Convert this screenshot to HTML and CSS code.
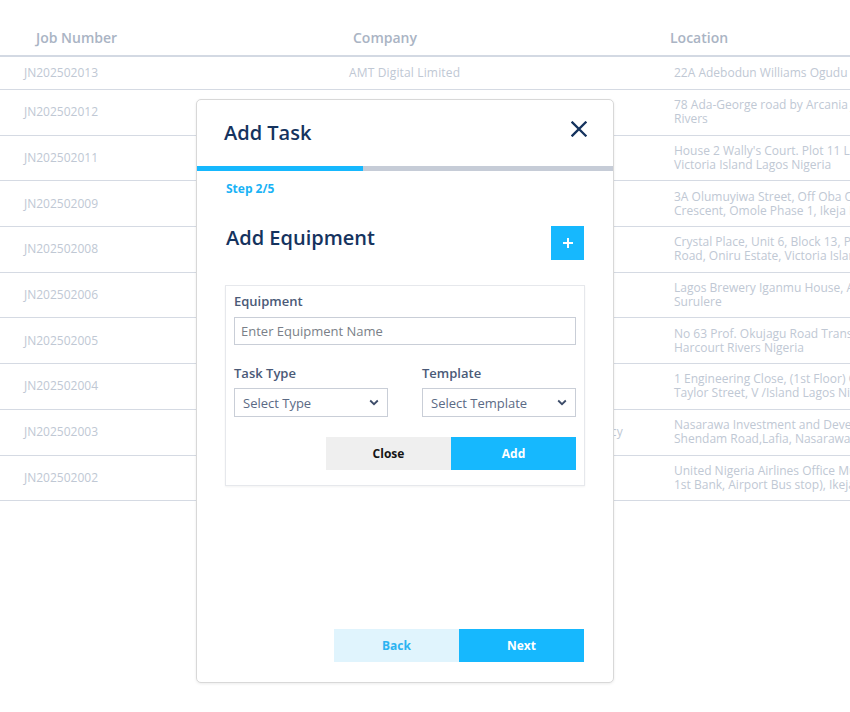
FILE: index.html
```html
<!DOCTYPE html>
<html lang="en">
<head>
<meta charset="utf-8">
<title>Jobs - Add Task</title>
<link rel="stylesheet" href="styles.css">
</head>
<body>
<div class="page">
  <div class="table">
    <div class="thead">
      <div class="th th-job">Job Number</div>
      <div class="th th-company">Company</div>
      <div class="th th-loc">Location</div>
    </div>
    <div class="tr tr-first">
      <div class="td td-job">JN202502013</div>
      <div class="td td-company">AMT Digital Limited</div>
      <div class="td td-loc">22A Adebodun Williams Ogudu Lagos</div>
    </div>
    <div class="tr">
      <div class="td td-job">JN202502012</div>
      <div class="td td-company">Eleme Petrochemicals Company</div>
      <div class="td td-loc">78 Ada-George road by Arcania Junction Port Harcourt<br>Rivers</div>
    </div>
    <div class="tr">
      <div class="td td-job">JN202502011</div>
      <div class="td td-company">Lagos Continental Hotel</div>
      <div class="td td-loc">House 2 Wally's Court. Plot 11 Lekki Road<br>Victoria Island Lagos Nigeria</div>
    </div>
    <div class="tr">
      <div class="td td-job">JN202502009</div>
      <div class="td td-company">Omole Estate Residents</div>
      <div class="td td-loc">3A Olumuyiwa Street, Off Oba Ogunji<br>Crescent, Omole Phase 1, Ikeja Lagos</div>
    </div>
    <div class="tr">
      <div class="td td-job">JN202502008</div>
      <div class="td td-company">Crystal Place Limited</div>
      <div class="td td-loc">Crystal Place, Unit 6, Block 13, Palace<br>Road, Oniru Estate, Victoria Island</div>
    </div>
    <div class="tr">
      <div class="td td-job">JN202502006</div>
      <div class="td td-company">Nigerian Breweries Plc</div>
      <div class="td td-loc">Lagos Brewery Iganmu House, Abebe Village Road<br>Surulere</div>
    </div>
    <div class="tr">
      <div class="td td-job">JN202502005</div>
      <div class="td td-company">Okujagu Services</div>
      <div class="td td-loc">No 63 Prof. Okujagu Road Trans Amadi Port<br>Harcourt Rivers Nigeria</div>
    </div>
    <div class="tr">
      <div class="td td-job">JN202502004</div>
      <div class="td td-company">Engineering Close Limited</div>
      <div class="td td-loc">1 Engineering Close, (1st Floor) Off Idowu<br>Taylor Street, V /Island Lagos Nigeria</div>
    </div>
    <div class="tr">
      <div class="td td-job">JN202502003</div>
      <div class="td td-company">Nasarawa Investment and Development Agency</div>
      <div class="td td-loc">Nasarawa Investment and Development Agency,<br>Shendam Road,Lafia, Nasarawa State</div>
    </div>
    <div class="tr">
      <div class="td td-job">JN202502002</div>
      <div class="td td-company">United Nigeria Airlines</div>
      <div class="td td-loc">United Nigeria Airlines Office Murtala (beside<br>1st Bank, Airport Bus stop), Ikeja Lagos</div>
    </div>
  </div>

  <div class="modal">
    <div class="modal-head">
      <h2 class="modal-title">Add Task</h2>
      <button class="icon-btn close-x" aria-label="Close">
        <svg width="16" height="16" viewBox="0 0 16 16"><path d="M1.5 1.5 L14.5 14.5 M14.5 1.5 L1.5 14.5" stroke="#15335e" stroke-width="2.3" stroke-linecap="square" fill="none"/></svg>
      </button>
    </div>
    <div class="progress"><div class="progress-fill"></div></div>
    <div class="modal-body">
      <div class="step">Step 2/5</div>
      <div class="section-head">
        <h3 class="section-title">Add Equipment</h3>
        <button class="plus-btn" aria-label="Add equipment">
          <svg width="12" height="12" viewBox="0 0 12 12"><path d="M6 1 V11 M1 6 H11" stroke="#fff" stroke-width="2" fill="none"/></svg>
        </button>
      </div>
      <div class="card">
        <label class="label">Equipment</label>
        <div class="input">Enter Equipment Name</div>
        <div class="two-col">
          <div class="field">
            <label class="label">Task Type</label>
            <div class="select">Select Type
              <svg class="chev" width="10" height="7" viewBox="0 0 10 7"><path d="M1.2 1.5 L5 5.2 L8.8 1.5" stroke="#3d4c69" stroke-width="1.8" fill="none"/></svg>
            </div>
          </div>
          <div class="field">
            <label class="label">Template</label>
            <div class="select">Select Template
              <svg class="chev" width="10" height="7" viewBox="0 0 10 7"><path d="M1.2 1.5 L5 5.2 L8.8 1.5" stroke="#3d4c69" stroke-width="1.8" fill="none"/></svg>
            </div>
          </div>
        </div>
        <div class="card-actions">
          <button class="btn btn-gray">Close</button>
          <button class="btn btn-blue">Add</button>
        </div>
      </div>
      <div class="modal-foot">
        <button class="btn btn-light">Back</button>
        <button class="btn btn-blue">Next</button>
      </div>
    </div>
  </div>
</div>
</body>
</html>
```

FILE: styles.css
```css
* { box-sizing: border-box; }
html, body { margin: 0; padding: 0; background: #fff; }
body {
  font-family: "Open Sans", "Liberation Sans", sans-serif;
  width: 850px;
  height: 712px;
  overflow: hidden;
}
.page {
  position: relative;
  width: 850px;
  height: 712px;
  overflow: hidden;
}
.table { width: 1120px; }
.thead, .tr {
  display: grid;
  grid-template-columns: 345px 321px 454px;
  align-items: center;
}
.thead {
  height: 57px;
  padding-top: 20px;
  border-bottom: 2px solid #d3d9e3;
}
.th {
  font-size: 14px;
  line-height: 18px;
  font-weight: 600;
  color: #aab4c4;
}
.th-job { padding-left: 36px; }
.th-company { padding-left: 8px; }
.th-loc { padding-left: 4px; }
.tr {
  height: 45.7px;
  border-bottom: 1px solid #d5dae3;
}
.tr-first { height: 33px; }
.td {
  font-size: 12px;
  line-height: 14px;
  color: #c0c8d4;
  white-space: nowrap;
}
.td-job { padding-left: 24px; }
.td-company { padding-left: 4px; letter-spacing: 0.15px; }
.td-loc { padding-left: 8px; }

.modal {
  position: absolute;
  left: 196px;
  top: 99px;
  width: 418px;
  height: 584px;
  background: #fff;
  border: 1px solid #d8d8d8;
  border-radius: 5px;
  box-shadow: 0 1px 3px rgba(0, 0, 0, 0.08);
  display: flex;
  flex-direction: column;
  overflow: hidden;
}
.modal-head {
  height: 66px;
  display: flex;
  align-items: center;
  justify-content: space-between;
  padding: 0 26px 0 27px;
}
.modal-title {
  margin: 0;
  font-size: 20px;
  line-height: 26px;
  font-weight: 600;
  color: #15335e;
}
.icon-btn {
  border: 0;
  background: none;
  padding: 0;
  width: 16px;
  height: 16px;
  display: flex;
  position: relative;
  top: -4px;
}
.progress {
  height: 5px;
  background: #c6ccd7;
}
.progress-fill {
  width: 40%;
  height: 100%;
  background: #16b8fe;
}
.modal-body {
  flex: 1;
  display: flex;
  flex-direction: column;
  padding: 0 28px 20px 28px;
}
.step {
  margin-top: 11px;
  padding-left: 1px;
  font-size: 12px;
  line-height: 14px;
  font-weight: 700;
  color: #1ab3f6;
}
.section-head {
  margin-top: 30px;
  display: flex;
  justify-content: space-between;
  align-items: flex-start;
}
.section-title {
  margin: 0;
  padding-left: 1px;
  font-size: 20px;
  line-height: 24px;
  font-weight: 600;
  color: #15335e;
}
.plus-btn {
  width: 33px;
  height: 34px;
  margin-right: 1px;
  border: 0;
  padding: 0;
  background: #16b8fe;
  display: flex;
  align-items: center;
  justify-content: center;
}
.card {
  margin-top: 25px;
  border: 1px solid #e6e8ec;
  box-shadow: 0 1px 2px rgba(0, 0, 0, 0.05);
  padding: 7px 8px 15px 8px;
  display: flex;
  flex-direction: column;
}
.label {
  display: block;
  font-size: 13px;
  line-height: 16px;
  font-weight: 600;
  color: #4a5a77;
}
.input {
  margin-top: 8px;
  height: 28px;
  border: 1px solid #c9ced7;
  padding: 0 6px;
  display: flex;
  align-items: center;
  font-size: 13px;
  color: #7a7f88;
}
.two-col {
  margin-top: 20px;
  display: grid;
  grid-template-columns: 154px 154px;
  column-gap: 34px;
}
.select {
  margin-top: 7px;
  height: 29px;
  border: 1px solid #c9ced7;
  padding: 0 8px 0 8px;
  display: flex;
  align-items: center;
  justify-content: space-between;
  font-size: 13px;
  color: #5b6a85;
}
.chev { margin-top: -1px; }
.card-actions {
  margin-top: 20px;
  display: flex;
  justify-content: flex-end;
}
.btn {
  width: 125px;
  height: 33px;
  border: 0;
  padding: 0;
  font-family: "Open Sans", "Liberation Sans", sans-serif;
  font-size: 12px;
  font-weight: 700;
  cursor: pointer;
}
.btn-gray { background: #efefef; color: #151515; }
.btn-blue { background: #16b8fe; color: #fff; }
.btn-light { background: #e0f4fd; color: #2cb3f1; }
.modal-foot {
  margin-top: auto;
  display: flex;
  justify-content: flex-end;
  padding-right: 1px;
}
```
